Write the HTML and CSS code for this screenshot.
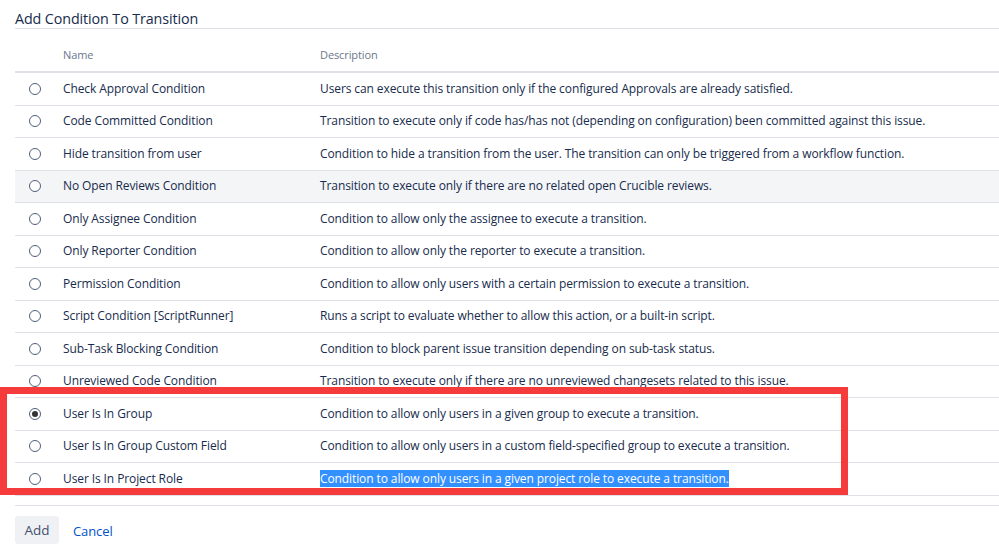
FILE: index.html
```html
<!DOCTYPE html>
<html>
<head>
<meta charset="utf-8">
<link rel="stylesheet" href="styles.css">
</head>
<body>
<div class="page">
  <h2 class="title">Add Condition To Transition</h2>
  <table class="conds">
    <thead>
      <tr><th class="c-radio"></th><th class="c-name">Name</th><th class="c-desc">Description</th></tr>
    </thead>
    <tbody>
      <tr><td class="c-radio"><span class="radio"></span></td><td>Check Approval Condition</td><td>Users can execute this transition only if the configured Approvals are already satisfied.</td></tr>
      <tr><td class="c-radio"><span class="radio"></span></td><td>Code Committed Condition</td><td>Transition to execute only if code has/has not (depending on configuration) been committed against this issue.</td></tr>
      <tr><td class="c-radio"><span class="radio"></span></td><td>Hide transition from user</td><td>Condition to hide a transition from the user. The transition can only be triggered from a workflow function.</td></tr>
      <tr class="hover"><td class="c-radio"><span class="radio"></span></td><td>No Open Reviews Condition</td><td>Transition to execute only if there are no related open Crucible reviews.</td></tr>
      <tr><td class="c-radio"><span class="radio"></span></td><td>Only Assignee Condition</td><td>Condition to allow only the assignee to execute a transition.</td></tr>
      <tr><td class="c-radio"><span class="radio"></span></td><td>Only Reporter Condition</td><td>Condition to allow only the reporter to execute a transition.</td></tr>
      <tr><td class="c-radio"><span class="radio"></span></td><td>Permission Condition</td><td>Condition to allow only users with a certain permission to execute a transition.</td></tr>
      <tr><td class="c-radio"><span class="radio"></span></td><td>Script Condition [ScriptRunner]</td><td>Runs a script to evaluate whether to allow this action, or a built-in script.</td></tr>
      <tr><td class="c-radio"><span class="radio"></span></td><td>Sub-Task Blocking Condition</td><td>Condition to block parent issue transition depending on sub-task status.</td></tr>
      <tr><td class="c-radio"><span class="radio"></span></td><td>Unreviewed Code Condition</td><td>Transition to execute only if there are no unreviewed changesets related to this issue.</td></tr>
      <tr><td class="c-radio"><span class="radio checked"></span></td><td>User Is In Group</td><td>Condition to allow only users in a given group to execute a transition.</td></tr>
      <tr><td class="c-radio"><span class="radio"></span></td><td>User Is In Group Custom Field</td><td>Condition to allow only users in a custom field-specified group to execute a transition.</td></tr>
      <tr><td class="c-radio"><span class="radio"></span></td><td>User Is In Project Role</td><td><span class="selected">Condition to allow only users in a given project role to execute a transition.</span></td></tr>
    </tbody>
  </table>
  <div class="buttons">
    <button class="btn">Add</button>
    <a class="cancel" href="#">Cancel</a>
  </div>
  <div class="highlight"></div>
</div>
</body>
</html>
```
FILE: styles.css
```css
html, body {
  margin: 0;
  padding: 0;
  background: #fff;
}
body {
  font-family: "Open Sans", "Noto Sans", sans-serif;
  font-size: 12px;
  letter-spacing: -0.1px;
  color: #172b4d;
}
.page {
  position: relative;
  padding-left: 15px;
  height: 553px;
  overflow: hidden;
}
.title {
  margin: 0;
  padding-top: 8px;
  height: 20px;
  font-size: 14.3px;
  font-weight: normal;
  line-height: 21px;
  letter-spacing: -0.1px;
  color: #172b4d;
  border-bottom: 1px solid #dfe1e6;
}
.conds {
  width: 100%;
  border-collapse: collapse;
  margin-top: 0;
}
.conds th {
  height: 43px;
  padding: 13px 0 0 0;
  box-sizing: border-box;
  text-align: left;
  font-weight: normal;
  font-size: 11px;
  color: #6b778c;
  border-bottom: 2px solid #dfe1e6;
  line-height: 26px;
  vertical-align: top;
}
.conds td {
  height: 31.5px;
  padding: 0;
  border-bottom: 1px solid #dfe1e6;
  line-height: 18px;
  white-space: nowrap;
}
.conds .c-radio { width: 48px; text-align: left; }
.conds .c-name { width: 257px; }
.conds tr.hover td { background: #f4f5f7; }
.radio {
  display: inline-block;
  box-sizing: border-box;
  width: 12px;
  height: 12px;
  margin-left: 14px;
  border: 1px solid #505f79;
  border-radius: 50%;
  vertical-align: middle;
  position: relative;
  top: -1px;
  background: #fff;
}
.radio.checked::after {
  content: "";
  position: absolute;
  left: 2px;
  top: 2px;
  width: 6px;
  height: 6px;
  border-radius: 50%;
  background: #333;
}
.selected {
  background: #3390ff;
  color: #fff;
}
.buttons {
  margin-top: 9px;
  border-top: 1px solid #dfe1e6;
  padding-top: 10px;
  display: flex;
  align-items: center;
  gap: 14px;
}
.btn {
  font-family: inherit;
  font-size: 13.5px;
  color: #42526e;
  background: #f0f1f4;
  border: none;
  border-radius: 3px;
  width: 44px;
  height: 28px;
  padding: 0;
}
.cancel {
  color: #0052cc;
  text-decoration: none;
  font-size: 13px;
  position: relative;
  top: 1px;
}
.highlight {
  position: absolute;
  left: 0;
  top: 387px;
  width: 834px;
  height: 94px;
  border: 7px solid #f53b3b;
  pointer-events: none;
}
```
